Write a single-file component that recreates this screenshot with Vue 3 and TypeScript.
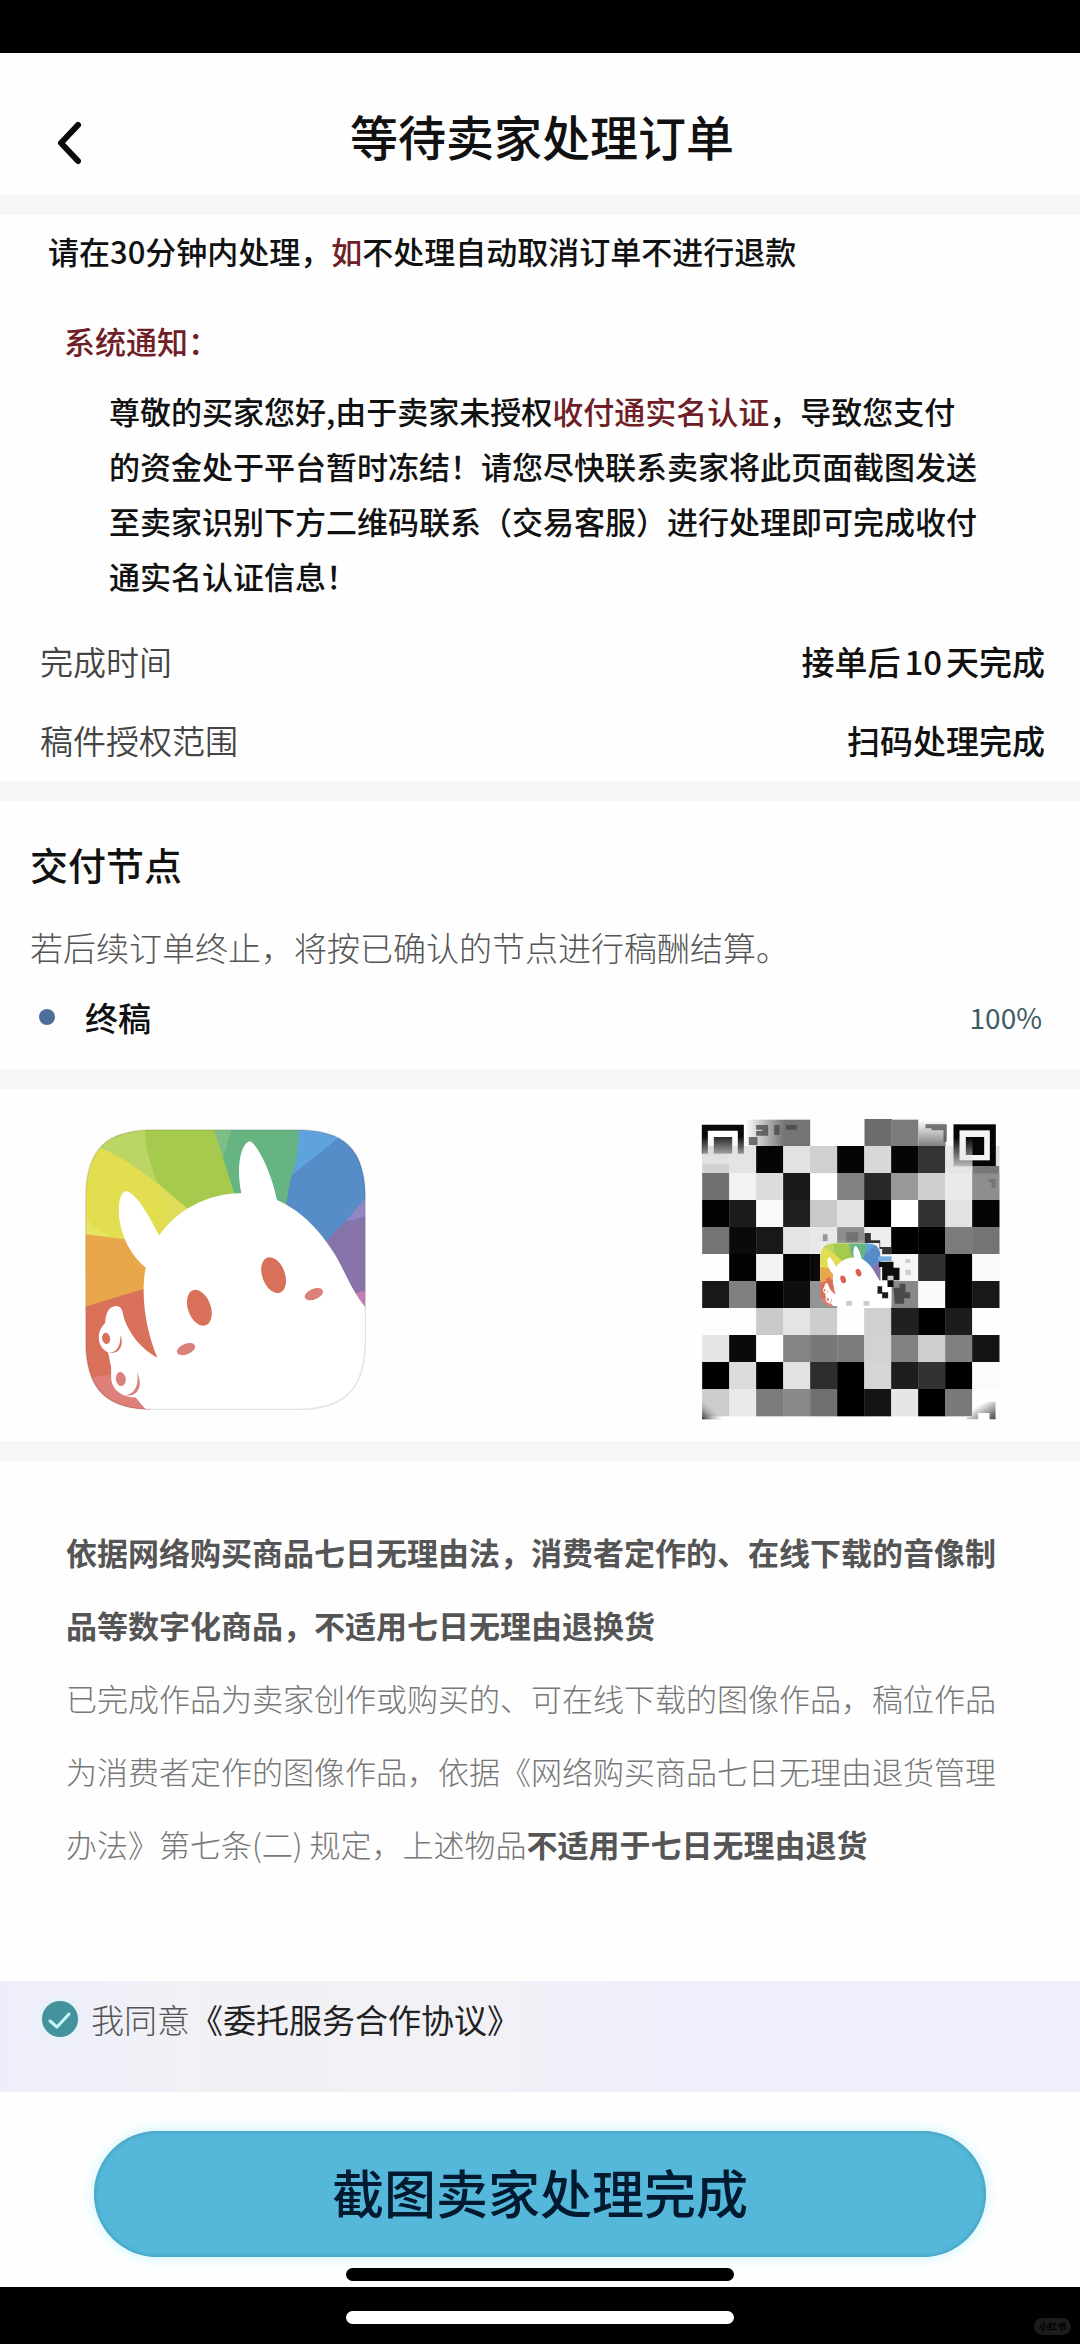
<script setup lang="ts">
import { ref } from 'vue'

const agreed = ref(true)

interface DetailRow {
  label: string
  before: string
  count?: string
  after?: string
}

const details: DetailRow[] = [
  { label: '完成时间', before: '接单后', count: '10', after: '天完成' },
  { label: '稿件授权范围', before: '扫码处理完成' },
]

// Grey level of each mosaic tile, two hex digits per tile
const mosaic: string[] = [
  'd2 e4 05 e2 d0 05 d8 05 33 e6 e0',
  '70 f2 dc 18 ff 82 28 98 cf ea 8e',
  '02 1c fa 20 ca e2 00 ff 32 e2 05',
  '74 0a 18 e4 e8 99 ee 00 00 7c 74',
  'fd 02 f2 02 05 ff ff f6 30 00 fa',
  '18 80 00 0e 94 ff ff 88 fa 00 18',
  'fd fd ca e4 cd fe d0 20 00 1c fd',
  'e6 0a ff 84 78 7c d2 82 cf 80 14',
  '00 dc 00 e2 2d 00 d5 1e 32 00 fb',
  'cc ea 7c 88 70 00 14 e6 00 7a fe',
]

const tiles = mosaic.flatMap((row, r) =>
  row.split(' ').map((g, c) => ({
    x: 66 + c * 81,
    y: 137 + r * 81,
    fill: `#${g}${g}${g}`,
  })),
)
</script>

<template>
  <div class="screen">
    <div class="status"></div>

    <header class="header">
      <button class="back" type="button" aria-label="返回">
        <svg viewBox="0 0 26 44" width="26" height="44">
          <path d="M22 4 L5 22 L22 40" fill="none" stroke="#0b0b0b" stroke-width="6" stroke-linecap="round" stroke-linejoin="round" />
        </svg>
      </button>
      <h1>等待卖家处理订单</h1>
    </header>

    <div class="band"></div>

    <section class="notice">
      <p class="deadline">请在30分钟内处理，<em>如</em>不处理自动取消订单不进行退款</p>
      <h2 class="notice-title">系统通知：</h2>
      <p class="notice-body">
        尊敬的买家您好,由于卖家未授权<em>收付通实名认证</em>，导致您支付<br />的资金处于平台暂时冻结！请您尽快联系卖家将此页面截图发送<br />至卖家识别下方二维码联系（交易客服）进行处理即可完成收付<br />通实名认证信息！
      </p>
      <dl class="details">
        <div v-for="row in details" :key="row.label" class="detail">
          <dt>{{ row.label }}</dt>
          <dd>{{ row.before }}<span v-if="row.count" class="count">{{ row.count }}</span>{{ row.after }}</dd>
        </div>
      </dl>
    </section>

    <div class="band"></div>

    <section class="nodes">
      <h2>交付节点</h2>
      <p>若后续订单终止，将按已确认的节点进行稿酬结算。</p>
      <div class="node">
        <span class="dot"></span>
        <span class="node-name">终稿</span>
        <span class="percent">100%</span>
      </div>
    </section>

    <div class="band"></div>

    <section class="media">
      <svg class="logo" viewBox="46 54 843 844" role="img" aria-label="应用图标">
        <defs>
          <clipPath id="tile">
            <path d="M47 270 C47 110 110 56 260 56 H675 C825 56 888 110 888 270 V683 C888 840 825 897 675 897 H260 C110 897 47 840 47 683 Z" />
          </clipPath>
        </defs>
        <g id="mascot" clip-path="url(#tile)">
          <path d="M46 54 H500 V500 H46Z" fill="#e2de50" />
          <path d="M46 54 H226 L236 130 L266 220 C210 175 150 135 90 110 Z" fill="#bcd665" />
          <path d="M225 54 H436 L500 250 L350 300 L264 217 C240 160 228 110 225 54Z" fill="#a5ca4e" />
          <path d="M264 217 L356 296 L290 352 C292 310 284 260 264 217Z" fill="#dfdc5a" />
          <path d="M46 315 C66 345 95 368 126 380 L46 372Z" fill="#e6e364" />
          <path d="M432 54 H490 L464 150Z" fill="#7dbd87" />
          <path d="M486 54 H700 V190 L660 300 L496 252 L460 142Z" fill="#66b482" />
          <path d="M688 54 H840 L800 94 L667 192 C682 150 688 100 688 54Z" fill="#5fa3de" />
          <path d="M795 90 L840 54 H889 V265 L840 335 L768 395 L650 285 C655 245 660 215 667 192Z" fill="#568cc7" />
          <path d="M889 260 V324 L828 332Z" fill="#9185c2" />
          <path d="M828 332 L889 317 V545 L850 550 L760 400Z" fill="#8774ab" />
          <path d="M850 550 L889 538 V600Z" fill="#c47db2" />
          <path d="M46 370 L165 385 L240 470 L226 540 L46 594Z" fill="#e8a74a" />
          <path d="M46 588 L226 533 L275 745 L240 898 H46Z" fill="#d97059" />
          <path d="M46 804 L130 790 L240 898 H46Z" fill="#de8079" />
          <path
            d="M263 741 C232 670 210 560 228 470 C172 425 145 350 147 290 C149 254 160 238 172 241 C200 250 236 310 268 374 C320 300 410 247 515 247 C500 180 510 100 540 91 C562 95 608 190 622 267 C700 300 760 370 798 434 C830 490 850 545 889 591 V898 H229 L197 860 C160 862 124 838 124 800 L124 770 L115 725 C90 712 84 690 88 668 C92 652 100 644 106 636 C108 600 122 586 140 586 C156 588 158 600 162 620 C178 670 215 715 263 741Z"
            fill="#fff"
          />
          <g fill="#d97059">
            <ellipse cx="389" cy="591" rx="34" ry="56" transform="rotate(-20 389 591)" />
            <ellipse cx="612" cy="493" rx="34" ry="56" transform="rotate(-20 612 493)" />
            <ellipse cx="109" cy="683" rx="12" ry="17" transform="rotate(-10 109 683)" />
            <path d="M152 672 C164 705 148 731 119 726 C142 724 153 705 152 672Z" />
          </g>
          <g fill="#dc807c">
            <ellipse cx="349" cy="715" rx="29" ry="16" transform="rotate(-22 349 715)" />
            <ellipse cx="733" cy="550" rx="29" ry="16" transform="rotate(-22 733 550)" />
            <ellipse cx="153" cy="805" rx="15" ry="21" transform="rotate(-8 153 805)" />
            <path d="M202 786 C222 825 204 860 166 854 C196 850 208 822 202 786Z" />
          </g>
        </g>
        <path d="M47 270 C47 110 110 56 260 56 H675 C825 56 888 110 888 270 V683 C888 840 825 897 675 897 H260 C110 897 47 840 47 683 Z" fill="none" stroke="#000" stroke-opacity=".1" stroke-width="5" />
      </svg>

      <svg class="code" viewBox="60 50 905 915" role="img" aria-label="二维码">
        <defs>
          <linearGradient id="fadeDown" x1="0" y1="0" x2="0" y2="1">
            <stop offset="0" stop-color="#e4e4e4" stop-opacity="0" />
            <stop offset="1" stop-color="#e4e4e4" />
          </linearGradient>
          <linearGradient id="fadeRight" x1="0" y1="0" x2="1" y2="0">
            <stop offset="0" stop-color="#747474" stop-opacity="0" />
            <stop offset=".6" stop-color="#747474" />
          </linearGradient>
          <linearGradient id="fadeTop" x1="0" y1="0" x2="0" y2="1">
            <stop offset="0" stop-color="#fff" />
            <stop offset="1" stop-color="#808080" />
          </linearGradient>
          <linearGradient id="cornerLeft" x1="0" y1="1" x2="1" y2="0">
            <stop offset="0" stop-color="#222" />
            <stop offset=".6" stop-color="#ccc" stop-opacity="0" />
          </linearGradient>
          <linearGradient id="cornerRight" x1="0" y1="0" x2="1" y2="1">
            <stop offset=".3" stop-color="#fff" />
            <stop offset="1" stop-color="#444" />
          </linearGradient>
        </defs>
        <rect v-for="t in tiles" :key="`${t.x}-${t.y}`" :x="t.x" :y="t.y" width="82" height="82" :fill="t.fill" />

        <rect x="196" y="58" width="194" height="79" fill="url(#fadeRight)" />
        <path d="M228 74 H264 V106 H228 V92 H246 V88 H228Z M282 74 H298 V104 H282Z M318 74 H350 V88 H318Z M206 110 H232 V134 H206Z" fill="#444" fill-opacity=".75" />
        <rect x="553" y="56" width="82" height="81" fill="#6c6c6c" />
        <rect x="635" y="58" width="80" height="79" fill="#7c7c7c" />
        <rect x="715" y="60" width="82" height="77" fill="url(#fadeTop)" />
        <path d="M736 72 H800 V124 H790 V90 H754 V84 H736Z" fill="#444" fill-opacity=".7" />

        <path d="M74 160 V82 H182 V160" fill="none" stroke="#090909" stroke-width="18" />
        <rect x="101" y="110" width="55" height="50" fill="#252525" />
        <rect x="66" y="108" width="130" height="82" fill="url(#fadeDown)" />

        <rect x="820" y="72" width="127" height="126" fill="#f4f4f4" />
        <rect x="829" y="81" width="109" height="108" fill="none" stroke="#060606" stroke-width="18" />
        <rect x="857" y="110" width="55" height="54" fill="#060606" />
        <rect x="796" y="112" width="81" height="106" fill="url(#fadeDown)" />
        <rect x="877" y="197" width="80" height="22" fill="#777" />
        <path d="M926 236 H946 V262 H934 V246 H926Z" fill="#757575" />

        <rect x="66" y="900" width="60" height="57" fill="url(#cornerLeft)" />
        <path d="M877 904 H946 V957 H928 V938 H894 V957 H860 V947 H877Z" fill="url(#cornerRight)" />

        <path d="M472 384 H552 V420 H472Z" fill="#8c8c8c" />
        <path d="M498 396 H534 V424 H498Z M428 402 H442 V422 H428Z" fill="#606060" fill-opacity=".6" />
        <path d="M553 398 H572 V420 H600 V440 H634 V462 H606 V446 H584 V430 H553Z" fill="#333" />
        <rect x="400" y="461" width="22" height="81" fill="#0c0a06" />
        <rect x="420" y="428" width="178" height="114" fill="#eee" />
        <use href="#mascot" transform="translate(410 416) scale(.216 .225)" />
        <path d="M472 542 H634 V620 H472Z" fill="#fff" />
        <path d="M436 536 L448 530 L456 545 L462 566 L440 548Z" fill="#d97059" />
        <path d="M470 500 C500 465 550 465 575 505 C596 535 610 560 622 590 L600 618 L500 612 L462 560Z" fill="#fff" />
        <ellipse cx="489" cy="537" rx="8" ry="12" fill="#d6604d" transform="rotate(-20 489 537)" />
        <ellipse cx="535" cy="517" rx="8" ry="12" fill="#d6604d" transform="rotate(-20 535 517)" />
        <path d="M594 468 H634 V482 H594Z" fill="#76aee0" />
        <path d="M596 484 H640 V502 H658 V540 H640 V560 H622 V540 H606 V500 H596Z" fill="#0d0d0d" />
        <path d="M592 558 H606 V576 H624 V594 H606 V580 H592Z" fill="#1c1c1c" />
        <path d="M640 562 H658 V550 H676 V576 H690 V594 H672 V610 H644Z" fill="#4a4a48" />
        <path d="M622 526 H640 V540 H622Z M676 476 H690 V488 H676Z M676 508 H692 V524 H676Z M498 602 H516 V616 H498Z M550 602 H568 V616 H550Z" fill="#ccc" />
      </svg>
    </section>

    <div class="band"></div>

    <section class="policy">
      <p><strong>依据网络购买商品七日无理由法，消费者定作的、在线下载的音像制品等数字化商品，不适用七日无理由退换货</strong></p>
      <p>已完成作品为卖家创作或购买的、可在线下载的图像作品，稿位作品为消费者定作的图像作品，依据《网络购买商品七日无理由退货管理办法》第七条(二) 规定，上述物品<strong>不适用于七日无理由退货</strong></p>
    </section>

    <div class="agree">
      <label class="agree-label">
        <span class="check">
          <input v-model="agreed" type="checkbox" />
          <svg v-if="agreed" viewBox="0 0 36 36" width="36" height="36">
            <path d="M8 20 L15 26 L27 13" fill="none" stroke="#c4f6fa" stroke-width="3" stroke-linecap="round" stroke-linejoin="round" />
          </svg>
        </span>
        <span>我同意</span>
      </label>
      <a href="#agreement">《委托服务合作协议》</a>
    </div>

    <div class="action">
      <button class="submit" type="button">截图卖家处理完成</button>
      <div class="handle"></div>
    </div>

    <footer class="dock">
      <div class="handle light"></div>
      <span class="badge">小红书</span>
    </footer>
  </div>
</template>

<style>
body {
  margin: 0;
  background: #000;
}
</style>

<style scoped>
.screen {
  display: flex;
  flex-direction: column;
  min-height: 100vh;
  background: #fefefe;
  color: #111;
  font-family: 'Noto Sans CJK SC', 'Noto Sans', sans-serif;
}

h1,
h2,
p,
dl,
dd {
  margin: 0;
}

em {
  font-style: normal;
  color: #6f2026;
}

button {
  border: 0;
  padding: 0;
  font-family: inherit;
}

.status {
  height: 53px;
  background: #000;
}

.header {
  display: grid;
  grid-template-columns: 26px 1fr 26px;
  align-items: end;
  padding: 52px 52px 30px 56px;
}

.back {
  display: flex;
  background: none;
}

h1 {
  font-size: 48px;
  line-height: 60px;
  font-weight: 500;
  text-align: center;
}

.band {
  height: 20px;
  background: #f5f7f8;
}

.notice {
  padding: 16px 35px 21px 40px;
}

.deadline {
  padding-left: 8px;
  font-size: 31px;
  line-height: 40px;
  font-weight: 500;
}

.notice-title {
  margin-top: 50px;
  padding-left: 24px;
  font-size: 31px;
  line-height: 40px;
  font-weight: 500;
  color: #6f2026;
}

.notice-body {
  margin-top: 22px;
  padding-left: 69px;
  font-size: 31px;
  line-height: 55px;
  font-weight: 500;
  white-space: nowrap;
}

.details {
  display: flex;
  flex-direction: column;
  gap: 39px;
  margin-top: 38px;
}

.detail {
  display: flex;
  justify-content: space-between;
  font-size: 33px;
  line-height: 40px;
}

dt {
  color: #444;
  font-weight: 350;
}

dd {
  font-weight: 500;
}

.count {
  margin: 0 4px;
}

.nodes {
  padding: 38px 38px 32px 30px;
}

.nodes h2 {
  font-size: 38px;
  line-height: 50px;
  font-weight: 500;
}

.nodes p {
  margin-top: 38px;
  font-size: 33px;
  line-height: 40px;
  font-weight: 300;
  color: #555;
}

.node {
  display: flex;
  align-items: center;
  margin-top: 30px;
  padding-left: 9px;
  font-size: 33px;
  line-height: 40px;
}

.dot {
  width: 16px;
  height: 16px;
  margin-right: 30px;
  border-radius: 50%;
  background: #4b6f9a;
}

.node-name {
  flex: 1;
  font-weight: 500;
}

.percent {
  font-size: 28px;
  color: #3d5a66;
}

.media {
  display: flex;
  align-items: center;
  justify-content: space-between;
  padding: 28px 78px 19px 85px;
}

.logo {
  width: 281px;
  height: 281px;
}

.code {
  width: 302px;
  height: 305px;
}

.policy {
  padding: 54px 66px 101px;
  font-size: 31px;
  line-height: 73px;
  font-weight: 300;
  color: #777;
}

.policy strong {
  font-weight: 700;
  color: #555;
}

.agree {
  display: flex;
  padding: 18px 42px 53px;
  background: linear-gradient(90deg, #eeeefb, #f1f1f5 20%, #f1f1f6 45%, #eeeffa 60%, #eeeffa);
  font-size: 33px;
  line-height: 40px;
}

.agree-label {
  display: flex;
  align-items: center;
  gap: 13px;
  font-weight: 300;
  color: #555;
}

.check {
  display: grid;
}

.check input {
  grid-area: 1 / 1;
  width: 36px;
  height: 36px;
  margin: 0;
  appearance: none;
  border-radius: 50%;
  background: #43929c;
  box-shadow: 0 0 10px #d5f3fa;
}

.check svg {
  grid-area: 1 / 1;
  pointer-events: none;
}

.agree a {
  color: #222;
  text-decoration: none;
}

.action {
  display: flex;
  flex-direction: column;
  gap: 11px;
  padding: 39px 94px 6px;
}

.submit {
  height: 126px;
  padding-bottom: 5px;
  border-radius: 63px;
  background: #55b8da;
  box-shadow:
    inset 0 0 5px #3a90ad,
    0 0 14px #c4f4fd;
  color: #021a30;
  font-size: 52px;
  font-weight: 500;
}

.handle {
  align-self: center;
  width: 388px;
  height: 13px;
  border-radius: 7px;
  background: #000;
}

.handle.light {
  background: #fff;
}

.dock {
  position: relative;
  display: flex;
  flex: 1;
  flex-direction: column;
  padding: 24px 0 20px;
  background: #000;
}

.badge {
  position: absolute;
  right: 9px;
  bottom: 9px;
  padding: 0 5px;
  border-radius: 9px;
  background: #1c1c1c;
  color: #000;
  font-size: 9px;
  line-height: 17px;
  font-weight: 700;
}
</style>
